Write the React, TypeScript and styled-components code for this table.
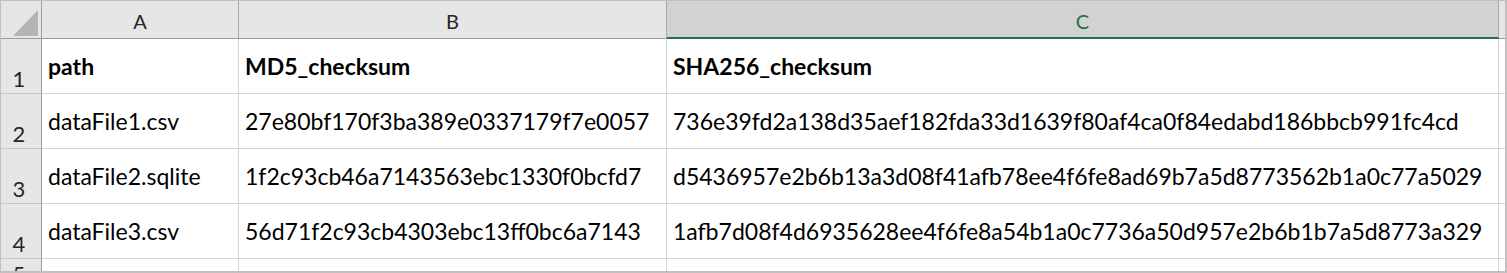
import React from "react";
import styled, { createGlobalStyle, css } from "styled-components";

const Global = createGlobalStyle`
  html, body { margin: 0; padding: 0; background: #ffffff; }
  #root { width: 1507px; height: 273px; }
`;

const Frame = styled.div`
  box-sizing: border-box;
  width: 1507px;
  height: 273px;
  overflow: hidden;
  border-style: solid;
  border-color: #c4bfbf;
  border-width: 1px 2px 2px 1px;
  background: #ffffff;
  font-family: Lato, "Liberation Sans", sans-serif;
`;

const Sheet = styled.div`
  display: grid;
  grid-template-columns: 41px 197px 428px 832px 6px;
  grid-template-rows: 38px repeat(4, 55px) 30px;
`;

const Corner = styled.div`
  box-sizing: border-box;
  background: #e6e6e6;
  border-right: 1px solid #9b9b9b;
  border-bottom: 1px solid #9b9b9b;
  position: relative;
  svg { position: absolute; left: 11px; top: 8px; }
`;

const ColHeader = styled.div<{ $selected?: boolean; $edge?: boolean }>`
  box-sizing: border-box;
  display: flex;
  align-items: center;
  justify-content: center;
  padding-top: 3px;
  background: #e6e6e6;
  color: #262626;
  font-size: 20px;
  border-right: 1px solid #a8a8a8;
  border-bottom: 1px solid #9b9b9b;
  ${(p) =>
    p.$selected &&
    css`
      background: #d2d2d2;
      color: #217346;
      border-bottom: 2px solid #217346;
      padding-top: 4px;
    `}
  ${(p) =>
    p.$edge &&
    css`
      border-right: none;
    `}
`;

const RowHeader = styled.div`
  box-sizing: border-box;
  display: flex;
  align-items: flex-end;
  justify-content: center;
  padding-right: 4px;
  padding-bottom: 2px;
  background: #e6e6e6;
  color: #262626;
  font-size: 22px;
  line-height: 24px;
  border-right: 1px solid #9b9b9b;
  border-bottom: 1px solid #c6c6c6;
`;

const Cell = styled.div<{ $bold?: boolean }>`
  box-sizing: border-box;
  display: flex;
  align-items: center;
  padding-left: 6px;
  padding-top: 0px;
  white-space: nowrap;
  overflow: hidden;
  color: #000000;
  font-size: 23px;
  font-weight: ${(p) => (p.$bold ? 700 : 400)};
  border-right: 1px solid #d4d4d4;
  border-bottom: 1px solid #d4d4d4;
`;

const rows: string[][] = [
  ["path", "MD5_checksum", "SHA256_checksum"],
  [
    "dataFile1.csv",
    "27e80bf170f3ba389e0337179f7e0057",
    "736e39fd2a138d35aef182fda33d1639f80af4ca0f84edabd186bbcb991fc4cd",
  ],
  [
    "dataFile2.sqlite",
    "1f2c93cb46a7143563ebc1330f0bcfd7",
    "d5436957e2b6b13a3d08f41afb78ee4f6fe8ad69b7a5d8773562b1a0c77a5029",
  ],
  [
    "dataFile3.csv",
    "56d71f2c93cb4303ebc13ff0bc6a7143",
    "1afb7d08f4d6935628ee4f6fe8a54b1a0c7736a50d957e2b6b1b7a5d8773a329",
  ],
  ["", "", ""],
];

export default function App() {
  return (
    <>
      <Global />
      <Frame>
        <Sheet>
          <Corner>
            <svg width="27" height="28" viewBox="0 0 27 28">
              <polygon points="1,27 26,1 26,27" fill="#b4b4b4" />
            </svg>
          </Corner>
          <ColHeader>A</ColHeader>
          <ColHeader>B</ColHeader>
          <ColHeader $selected>C</ColHeader>
          <ColHeader $edge />
          {rows.map((r, i) => (
            <React.Fragment key={i}>
              <RowHeader>{i + 1}</RowHeader>
              {r.map((v, j) => (
                <Cell key={j} $bold={i === 0}>
                  {v}
                </Cell>
              ))}
              <Cell />
            </React.Fragment>
          ))}
        </Sheet>
      </Frame>
    </>
  );
}
